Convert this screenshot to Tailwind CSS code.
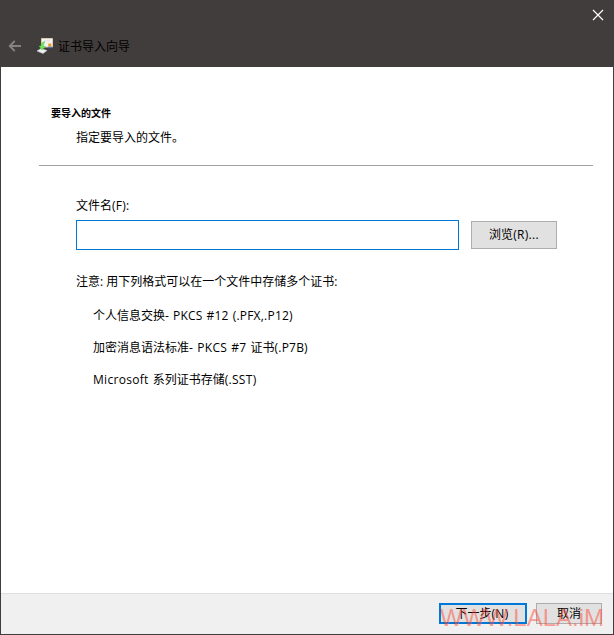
<!DOCTYPE html>
<html lang="zh-CN">
<head>
<meta charset="utf-8">
<title>证书导入向导</title>
<script src="https://cdn.jsdelivr.net/npm/@tailwindcss/browser@4"></script>
</head>
<body class="w-[614px] h-[635px] overflow-hidden bg-[#413d3c] font-['Open_Sans','Noto_Sans_CJK_SC',sans-serif] text-[12px] leading-4 text-black whitespace-nowrap">
<div class="relative flex h-full flex-col px-px pb-px">
  <header class="flex h-[67px] shrink-0 flex-col">
    <div class="flex h-[30px] justify-end pt-[9px] pr-[9px]">
      <svg class="size-3" viewBox="0 0 12 12" fill="none" stroke="#fff" stroke-width="1.2"><path d="M1 1l10 10M11 1L1 11"/></svg>
    </div>
    <div class="flex h-8 items-center pl-[7px]">
      <svg class="h-3 w-[14px]" viewBox="0 0 14 12" fill="none" stroke="#858281" stroke-width="1.8"><path d="M13 6H2M6.7 1L1.7 6l5 5"/></svg>
      <svg class="ml-[14px] size-[18px]" viewBox="0 0 18 18">
        <path d="M5.500 1.500h11v8.500h-11z" fill="#f4f1ee" stroke="#d8cbb0"/>
        <path d="M8 4h6" stroke="#e3dde2"/>
        <path d="M1 14l4-2.500 6 2-4 3z" fill="#eef0f2" stroke="#c3c6c8" stroke-width=".6"/>
        <path d="M8.500 4.500C6 5 5 7 5 9H3.200l2.600 4L9.500 9.500H7.600C7.400 7.500 8 6 9 5z" fill="#6fe25c" stroke="#4ccb40" stroke-width=".4"/>
        <path d="M13 9.500v2M15 9.500v2" stroke="#2e62c4" stroke-width="1.200"/>
        <circle cx="13.800" cy="8" r="1.700" fill="#e99c1d"/>
      </svg>
      <h1 class="ml-[4px] mt-[2px]">证书导入向导</h1>
    </div>
  </header>
  <main class="flex h-[526px] shrink-0 flex-col bg-white">
    <section class="ml-[38px] mr-[20px] h-[99px] border-b border-[#a0a0a0] pt-[38px] pl-[12px]">
      <h2 class="text-[10px] font-bold">要导入的文件</h2>
      <p class="mt-[9px] pl-[25px]">指定要导入的文件。</p>
    </section>
    <section class="flex flex-col pt-[32px] pl-[75px]">
      <label for="file">文件名<span class="tracking-[.2px]">(F):</span></label>
      <div class="mt-[6px] flex items-center gap-3">
        <input id="file" class="h-[30px] w-[383px] border border-[#0078d7] bg-white outline-none">
        <button class="h-[28px] w-[86px] border border-[#adadad] bg-[#e1e1e1]">浏览<span class="tracking-[.3px]">(R)...</span></button>
      </div>
      <p class="mt-[24px]">注意: 用下列格式可以在一个文件中存储多个证书:</p>
      <ul class="mt-[18px] flex flex-col gap-4 pl-[17px]">
        <li>个人信息交换<span class="tracking-[.22px] [word-spacing:.6px]">- PKCS #12 (.PFX,.P12)</span></li>
        <li>加密消息语法标准<span class="tracking-[.32px] [word-spacing:.6px]">- PKCS #7 </span>证书<span class="tracking-[.2px]">(.P7B)</span></li>
        <li><span class="tracking-[.3px] [word-spacing:.6px]">Microsoft </span>系列证书存储<span class="tracking-[.3px]">(.SST)</span></li>
      </ul>
    </section>
  </main>
  <footer class="flex flex-1 items-start justify-end gap-[9px] border-t border-[#dfdfdf] bg-[#f0f0f0] pt-[9px] pr-[11px]">
    <button class="h-[21px] w-[88px] border-2 border-[#0078d7] bg-[#e1e1e1] pr-[2px] leading-4">下一步<span class="tracking-[.3px]">(N)</span></button>
    <button class="h-[21px] w-[66px] border border-[#adadad] bg-[#e1e1e1] leading-4">取消</button>
  </footer>
  <div class="absolute top-[604px] left-[440px] font-['Liberation_Sans',sans-serif] text-[24px] leading-[28px] text-[#ff4a38]/50">WWW.LALA.iM</div>
</div>
</body>
</html>
